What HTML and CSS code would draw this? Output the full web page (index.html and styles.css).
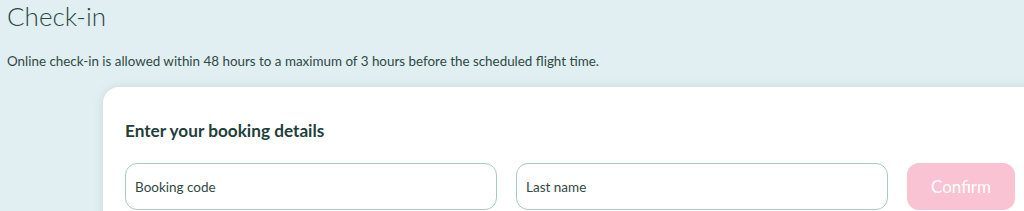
FILE: index.html
```html
<!DOCTYPE html>
<html lang="en">
<head>
    <meta charset="UTF-8">
    <meta name="viewport" content="width=device-width, initial-scale=1.0">
    <title>Check-in</title>
    <link rel="stylesheet" href="styles.css">
</head>
<body>
    <div class="page">
        <h1 class="page-title">Check-in</h1>
        <p class="page-intro">Online check-in is allowed within 48 hours to a maximum of 3 hours before the scheduled flight time.</p>

        <div class="card">
            <h2 class="card-title">Enter your booking details</h2>
            <form class="booking-form">
                <input class="field" type="text" placeholder="Booking code">
                <input class="field" type="text" placeholder="Last name">
                <button class="confirm-btn" type="button" disabled>Confirm</button>
            </form>
        </div>
    </div>
</body>
</html>
```

FILE: styles.css
```css
:root {
    --bg-color: #e1eff2;
    --text-color: #2f4a43;
    --heading-color: #22403a;
    --field-border: #a9cbbf;
    --button-disabled: #f9c3d3;
}

* {
    margin: 0;
    padding: 0;
    box-sizing: border-box;
}

body {
    font-family: 'Lato', 'Open Sans', sans-serif;
    background: var(--bg-color);
    color: var(--text-color);
    height: 211px;
    overflow: hidden;
}

.page {
    padding: 0 0 0 7px;
}

.page-title {
    font-size: 26px;
    font-weight: 300;
    line-height: 32px;
    color: #2b4740;
}

.page-intro {
    margin-top: 19px;
    font-size: 13.4px;
    line-height: 21px;
}

.card {
    margin: 15px 0 0 96px;
    width: 960px;
    background: #ffffff;
    border-radius: 16px 16px 0 0;
    padding: 33px 0 30px 22px;
    box-shadow: 0 0 8px rgba(120, 160, 165, 0.25);
}

.card-title {
    font-size: 17.2px;
    font-weight: 700;
    line-height: 22px;
    color: var(--heading-color);
}

.booking-form {
    display: flex;
    gap: 19px;
    margin-top: 21px;
}

.field {
    width: 372px;
    height: 47px;
    border: 1px solid var(--field-border);
    border-radius: 12px;
    padding: 0 9px;
    font-family: inherit;
    font-size: 13.5px;
    color: var(--text-color);
    outline: none;
}

.field::placeholder {
    color: #2f4a43;
}

.confirm-btn {
    width: 108px;
    height: 47px;
    border: none;
    border-radius: 12px;
    background: var(--button-disabled);
    color: #ffffff;
    font-family: inherit;
    font-size: 17px;
}
```
